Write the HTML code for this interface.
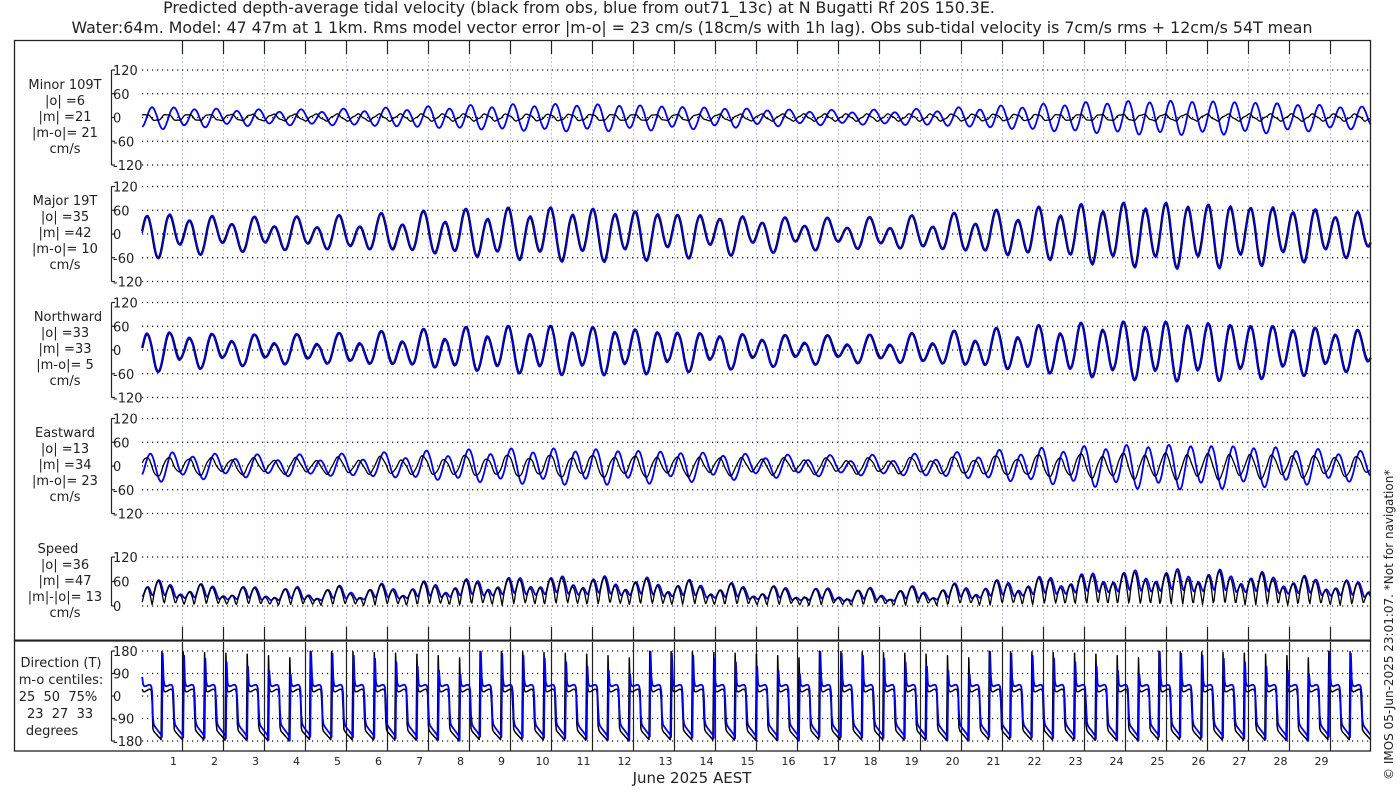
<!DOCTYPE html>
<html><head><meta charset="utf-8"><style>
html,body{margin:0;padding:0;background:#fff;width:1400px;height:800px;overflow:hidden}
svg{display:block}
text{font-family:"DejaVu Sans","Liberation Sans",sans-serif;fill:#222}
</style></head><body>
<svg id="s" width="1400" height="800" viewBox="0 0 1400 800" xmlns="http://www.w3.org/2000/svg">
<text x="579" y="13" font-size="15.8" text-anchor="middle">Predicted depth-average tidal velocity (black from obs, blue from out71_13c) at N Bugatti Rf 20S 150.3E.</text>
<text x="692" y="33" font-size="15.8" text-anchor="middle">Water:64m. Model: 47 47m at 1 1km. Rms model vector error |m-o| = 23 cm/s (18cm/s with 1h lag). Obs sub-tidal velocity is 7cm/s rms + 12cm/s 54T mean</text>
<g id="grid"></g>
<g id="curves"></g>
<rect x="14.5" y="40.5" width="1356" height="600" fill="none" stroke="#222" stroke-width="1.3"/>
<line x1="14" y1="640.5" x2="1371" y2="640.5" stroke="#222" stroke-width="2"/>
<rect x="14.5" y="641" width="1356" height="110" fill="none" stroke="#222" stroke-width="1.3"/>
<g font-size="13" text-anchor="middle">
<text x="65" y="89">Minor 109T</text><text x="65" y="105">|o| =6</text><text x="65" y="121">|m| =21</text><text x="65" y="137">|m-o|= 21</text><text x="65" y="153">cm/s</text>
<text x="65" y="205">Major 19T</text><text x="65" y="221">|o| =35</text><text x="65" y="237">|m| =42</text><text x="65" y="253">|m-o|= 10</text><text x="65" y="269">cm/s</text>
<text x="68" y="321">Northward</text><text x="65" y="337">|o| =33</text><text x="65" y="353">|m| =33</text><text x="65" y="369">|m-o|= 5</text><text x="65" y="385">cm/s</text>
<text x="65" y="437">Eastward</text><text x="65" y="453">|o| =13</text><text x="65" y="469">|m| =34</text><text x="65" y="485">|m-o|= 23</text><text x="65" y="501">cm/s</text>
<text x="58" y="553">Speed</text><text x="65" y="569">|o| =36</text><text x="65" y="585">|m| =47</text><text x="65" y="601">|m|-|o|= 13</text><text x="65" y="617">cm/s</text>
<text x="61" y="667">Direction (T)</text><text x="61" y="684">m-o centiles:</text><text x="58" y="701" xml:space="preserve">25  50  75%</text><text x="58" y="718" xml:space="preserve"> 23  27  33</text><text x="52" y="735">degrees</text>
</g>
<text x="692" y="783" font-size="15" text-anchor="middle">June 2025 AEST</text>
<text transform="translate(1393,780) rotate(-90)" font-size="12">© IMOS 05-Jun-2025 23:01:07. *Not for navigation*</text>
<g id="days" font-size="11" text-anchor="middle"></g>
</svg>
<script>
var NS="http://www.w3.org/2000/svg";
function el(p,n,a,t){var e=document.createElementNS(NS,n);for(var k in a)e.setAttribute(k,a[k]);if(t!==undefined)e.textContent=t;document.getElementById(p).appendChild(e);return e;}
var PD=41;
function tx(t){return 141+PD*t;}
var P=[{z:117.5,s:47.5/120},{z:234,s:47.5/120},{z:350,s:47.5/120},{z:466,s:47.5/120}];
for(var k=0;k<29;k++){var x=182.5+41*k;
 el("grid","line",{x1:x,y1:41,x2:x,y2:630,stroke:"#b8c4ee","stroke-width":1,"stroke-dasharray":"2,2"});
 el("grid","line",{x1:x,y1:41,x2:x,y2:54,stroke:"#222","stroke-width":1.2});
 el("grid","line",{x1:x,y1:627,x2:x,y2:641,stroke:"#222","stroke-width":1.2});
 el("grid","line",{x1:x,y1:642,x2:x,y2:751,stroke:"#222","stroke-width":1.2});
 el("days","text",{x:x-9,y:765},String(k+1));
}
function axis(ys,labels){
 var top=ys[0],bot=ys[ys.length-1];
 el("grid","line",{x1:111.5,y1:top,x2:111.5,y2:bot,stroke:"#222","stroke-width":1.2});
 for(var i=0;i<ys.length;i++){
  el("grid","line",{x1:111.5,y1:ys[i],x2:115,y2:ys[i],stroke:"#222","stroke-width":1.2});
  el("grid","line",{x1:142,y1:ys[i],x2:1370,y2:ys[i],stroke:"#111","stroke-width":1.2,"stroke-dasharray":"1.2,3.8"});
  el("grid","text",{x:113,y:ys[i]+5,"font-size":13},labels[i]);
 }
}
P.forEach(function(p){axis([p.z-47.5,p.z-23.75,p.z,p.z+23.75,p.z+47.5],["120","60","0","-60","-120"]);});
axis([557,581.5,606],["120","60","0"]);
axis([651,673.5,696,718.5,741],["180","90","0","-90","-180"]);
function M(t){return 48+18*Math.cos(2*Math.PI*(t-25.3)/14.77)+8*Math.cos(2*Math.PI*(t-25)/27.55);}
var W2=2*Math.PI/0.5175,W1=2*Math.PI/0.9973;
function vel(t,obs){
 var ph=-2.09+(obs?0.1:0);
 var maj=M(t)*(obs?0.96:1)*Math.cos(W2*t+ph)+ 16*Math.cos(W1*t+0.7);
 var mnr=obs? 8*Math.cos(W2*t+ph+0.6)+1.5*Math.sin(t*37)
            : (0.55*M(t))*Math.sin(W2*t+ph+0.3)+4*Math.cos(W1*t);
 var s=0.3256,c=0.9455;
 return {maj:maj,min:mnr,e:maj*s+mnr*c,n:maj*c-mnr*s};
}
function dir(t,obs){
 var ph=-2.09+(obs?0.1:0);
 var th=W2*t+ph+0.25;
 var r=obs?0.06:0.1;
 var a=Math.atan2(-r*Math.sin(th),Math.cos(th))*180/Math.PI;
 var b=a+(obs?22:42)+12*Math.sin(th);
 while(b>180)b-=360; while(b<-180)b+=360;
 return b;
}
function path(fn,col,w){
 var d="";
 for(var t=0.03;t<=30.0;t+=0.02){var v=fn(t);d+=(d?"L":"M")+tx(t).toFixed(1)+" "+v.toFixed(1);}
 el("curves","path",{d:d,fill:"none",stroke:col,"stroke-width":w,"stroke-linejoin":"round"});
}
// major/north: black under blue
path(function(t){return P[1].z-vel(t,true).maj*P[1].s;},"#000",2.4);
path(function(t){return P[2].z-vel(t,true).n*P[2].s;},"#000",2.4);
path(function(t){return P[1].z-vel(t,false).maj*P[1].s;},"#0000ff",1.5);
path(function(t){return P[2].z-vel(t,false).n*P[2].s;},"#0000ff",1.5);
[[false,"#0000ff",1.8],[true,"#000",1.3]].forEach(function(o){
 var obs=o[0],col=o[1],w=o[2];
 path(function(t){return P[0].z-vel(t,obs).min*P[0].s;},col,w);
 path(function(t){return P[3].z-vel(t,obs).e*P[3].s;},col,w);
 path(function(t){var v=vel(t,obs);return 606-Math.sqrt(v.e*v.e+v.n*v.n)*(49/120);},col,w);
});
path(function(t){return 696-dir(t,true)*(45/180);},"#000",1.5);
path(function(t){return 696-dir(t,false)*(45/180);},"#0000ff",1.8);
</script>
</body></html>
